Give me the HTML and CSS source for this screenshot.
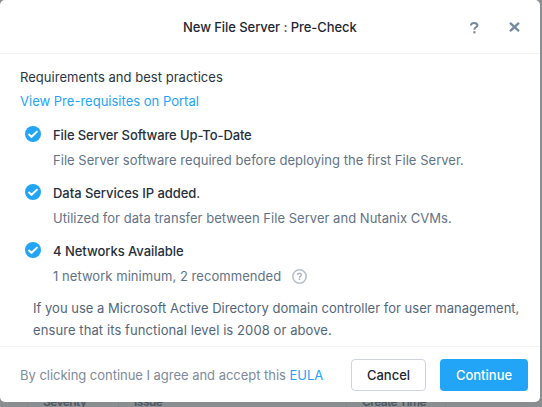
FILE: index.html
```
<!DOCTYPE html>
<html lang="en">
<head>
<meta charset="utf-8">
<title>New File Server : Pre-Check</title>
<link rel="stylesheet" href="styles.css">
</head>
<body>
<div class="table-head"><span class="cell c0"></span><span class="cell c1">Severity</span><span class="cell c2">Issue</span><span class="cell c3">Create Time</span></div>
<div class="modal">
  <header class="header">
    <h1 class="title"><span class="t-title">New File Server : Pre-Check</span></h1>
    <svg class="help" width="9" height="12" viewBox="0 0 9 12"><path d="M1 3.5V2.8Q1.6 1 4.3 1T7.5 3.3Q7.5 4.7 5.8 5.4Q4.4 6 4.4 7.8" fill="none" stroke="#7489a0" stroke-width="2"/><path d="M3.3 9.2h2.2v2.2H3.3z" fill="#7489a0"/></svg>
    <svg class="close" width="11" height="10" viewBox="0 0 11 10"><path d="M1 .8l9 8.4M10 .8L1 9.2" stroke="#7489a0" stroke-width="2.3"/></svg>
  </header>
  <main class="content">
    <p class="intro"><span class="t-req">Requirements and best practices</span></p>
    <a class="intro link"><span class="t-view">View Pre-requisites on Portal</span></a>
    <ul class="checks">
      <li class="check">
        <svg class="tick" width="16" height="16" viewBox="0 0 16 16"><circle cx="8" cy="8" r="8" fill="#22a5f7"/><path d="M3.5 8l3 2.8 6-5.7" fill="none" stroke="#fff" stroke-width="2"/></svg>
        <div><p class="name"><span class="t-a1">File Server Software Up-To-Date</span></p><p class="detail"><span class="t-a2">File Server software required before deploying the first File Server.</span></p></div>
      </li>
      <li class="check">
        <svg class="tick" width="16" height="16" viewBox="0 0 16 16"><circle cx="8" cy="8" r="8" fill="#22a5f7"/><path d="M3.5 8l3 2.8 6-5.7" fill="none" stroke="#fff" stroke-width="2"/></svg>
        <div><p class="name"><span class="t-b1">Data Services IP added.</span></p><p class="detail"><span class="t-b2">Utilized for data transfer between File Server and Nutanix CVMs.</span></p></div>
      </li>
      <li class="check">
        <svg class="tick" width="16" height="16" viewBox="0 0 16 16"><circle cx="8" cy="8" r="8" fill="#22a5f7"/><path d="M3.5 8l3 2.8 6-5.7" fill="none" stroke="#fff" stroke-width="2"/></svg>
        <div><p class="name"><span class="t-c1">4 Networks Available</span></p><p class="detail with-info"><span class="t-c2">1 network minimum, 2 recommended</span><svg class="info" width="15" height="15" viewBox="0 0 15 15"><circle cx="7.5" cy="7.5" r="6.7" fill="none" stroke="#b9c0cd" stroke-width="1.6"/><path d="M5.5 6V5.5Q5.8 4.3 7.5 4.3T9.4 5.8Q9.4 6.6 8.4 7.1Q7.5 7.5 7.5 8.7M7.5 9.6v1.5" fill="none" stroke="#a9b2c1" stroke-width="1.4"/></svg></p></div>
      </li>
    </ul>
    <p class="note"><span class="t-n1">If you use a Microsoft Active Directory domain controller for user management,</span><br><span class="t-n2">ensure that its functional level is 2008 or above.</span></p>
  </main>
  <footer class="footer">
    <p class="agree"><span class="t-f">By clicking continue I agree and accept this <a class="link">EULA</a></span></p>
    <button class="btn cancel">Cancel</button>
    <button class="btn primary">Continue</button>
  </footer>
</div>
</body>
</html>
```
FILE: styles.css
```
* { box-sizing: border-box; }
body {
  margin: 0;
  width: 542px;
  height: 407px;
  overflow: hidden;
  position: relative;
  background: #8a8e91;
  font-family: Inter, "Liberation Sans", sans-serif;
  font-size: 13px;
  color: #2b3642;
}
h1, p, ul { margin: 0; padding: 0; font-weight: 400; }
span { white-space: nowrap; }
.table-head {
  position: absolute;
  left: 0;
  bottom: -3px;
  display: flex;
  height: 16px;
  font-size: 12px;
  font-weight: 600;
  line-height: 16px;
  color: #4d5762;
}
.cell { border-right: 1px solid #82878b; padding-left: 15px; }
.c0 { width: 28px; }
.c1 { width: 91px; letter-spacing: -0.6px; }
.c2 { width: 228px; letter-spacing: -0.5px; }
.c3 { width: 99px; letter-spacing: -0.6px; }
.modal {
  position: relative;
  display: flex;
  flex-direction: column;
  width: 540px;
  height: 402px;
  background: #fff;
  border-radius: 5px;
}
.header {
  display: flex;
  align-items: center;
  height: 54px;
  border-bottom: 1px solid #eff1f3;
  padding: 0 20px 0 183px;
}
.title { width: 288px; font-size: 13px; font-weight: 500; line-height: 20px; color: #1d2733; }
.help { margin-top: 3px; }
.close { margin-left: 30px; }
.content { height: 292px; padding: 11px 20px 0; }
.intro { display: block; height: 24px; line-height: 24px; }
.link { color: #22a5f7; }
.checks { list-style: none; margin: 10px 0 0 5px; }
.check { display: flex; gap: 12px; height: 58px; line-height: 25px; }
.tick { margin-top: 3px; }
.name { color: #25303c; font-weight: 500; }
.detail { color: #627386; }
.with-info { display: flex; align-items: center; gap: 11px; }
.note { margin: 0 0 0 13px; line-height: 22px; color: #536679; }
.t-title { letter-spacing: -0.06px; }
.t-req { letter-spacing: 0.03px; }
.t-view { letter-spacing: 0.01px; }
.t-a1 { letter-spacing: -0.11px; }
.t-a2, .t-b2 { letter-spacing: 0.03px; }
.t-b1, .t-c1 { letter-spacing: -0.04px; }
.t-c2 { letter-spacing: 0.05px; }
.t-n1 { letter-spacing: 0.015px; }
.t-n2 { letter-spacing: 0.09px; }
.t-f { letter-spacing: -0.03px; }
.footer {
  display: flex;
  align-items: center;
  height: 56px;
  border-top: 1px solid #f0f2f4;
  padding: 0 12px 0 20px;
}
.agree { width: 331px; color: #7d8b9b; }
.btn {
  height: 32px;
  padding: 0;
  border-radius: 4px;
  font: 500 13px Inter, "Liberation Sans", sans-serif;
}
.cancel { width: 75px; background: #fff; border: 1px solid #d0d4de; color: #1d2733; }
.primary { width: 88px; margin-left: 14px; background: #22a5f7; border: 0; color: #fff; }
```
